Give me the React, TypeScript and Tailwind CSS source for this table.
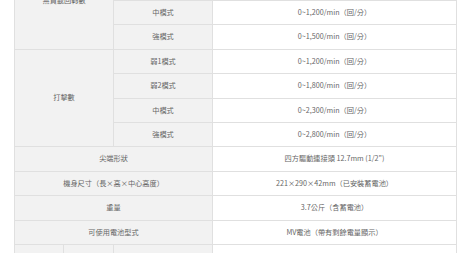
import React from 'react'

const th = 'border border-[#e0e0e0] bg-[#f2f2f2] text-center align-middle font-normal'
const td = 'border border-[#e0e0e0] bg-white text-center align-middle'

function ModeRows({ label, rows }: { label: string; rows: [string, string][] }) {
  return (
    <>
      {rows.map(([mode, value], i) => (
        <tr key={mode} className="h-[24.4px]">
          {i === 0 && (
            <th rowSpan={rows.length} colSpan={2} className={th}>
              {label}
            </th>
          )}
          <th className={th}>{mode}</th>
          <td className={td}>{value}</td>
        </tr>
      ))}
    </>
  )
}

export default function App() {
  return (
    <main className="h-[253px] w-[475px] overflow-hidden bg-white pl-[14px] text-[7.2px] leading-none text-[#666] [font-family:'Noto_Sans_CJK_TC','Noto_Sans',sans-serif]">
      <table className="-mt-[48.8px] w-[443px] table-fixed border-collapse">
        <colgroup>
          <col className="w-[49px]" />
          <col className="w-[50px]" />
          <col className="w-[99px]" />
          <col />
        </colgroup>
        <tbody>
          <ModeRows
            label="無負載回轉數"
            rows={[
              ['弱1模式', '0~800/min（回/分）'],
              ['弱2模式', '0~1,000/min（回/分）'],
              ['中模式', '0~1,200/min（回/分）'],
              ['強模式', '0~1,500/min（回/分）'],
            ]}
          />
          <ModeRows
            label="打擊數"
            rows={[
              ['弱1模式', '0~1,200/min（回/分）'],
              ['弱2模式', '0~1,800/min（回/分）'],
              ['中模式', '0~2,300/min（回/分）'],
              ['強模式', '0~2,800/min（回/分）'],
            ]}
          />
          <tr className="h-[24.4px]">
            <th colSpan={3} className={th}>尖端形狀</th>
            <td className={td}>四方驅動連接頭 12.7mm (1/2")</td>
          </tr>
          <tr className="h-[24.4px]">
            <th colSpan={3} className={th}>機身尺寸（長×高×中心高度）</th>
            <td className={td}>221×290×42mm（已安裝蓄電池）</td>
          </tr>
          <tr className="h-[24.4px]">
            <th colSpan={3} className={th}>重量</th>
            <td className={td}>3.7公斤（含蓄電池）</td>
          </tr>
          <tr className="h-[24.4px]">
            <th colSpan={3} className={th}>可使用電池型式</th>
            <td className={td}>MV電池（帶有剩餘電量顯示）</td>
          </tr>
          <tr className="h-[24.4px]">
            <th className={th}>&nbsp;</th>
            <th className={th}>&nbsp;</th>
            <th className={th}>&nbsp;</th>
            <td className={td}>&nbsp;</td>
          </tr>
        </tbody>
      </table>
    </main>
  )
}
